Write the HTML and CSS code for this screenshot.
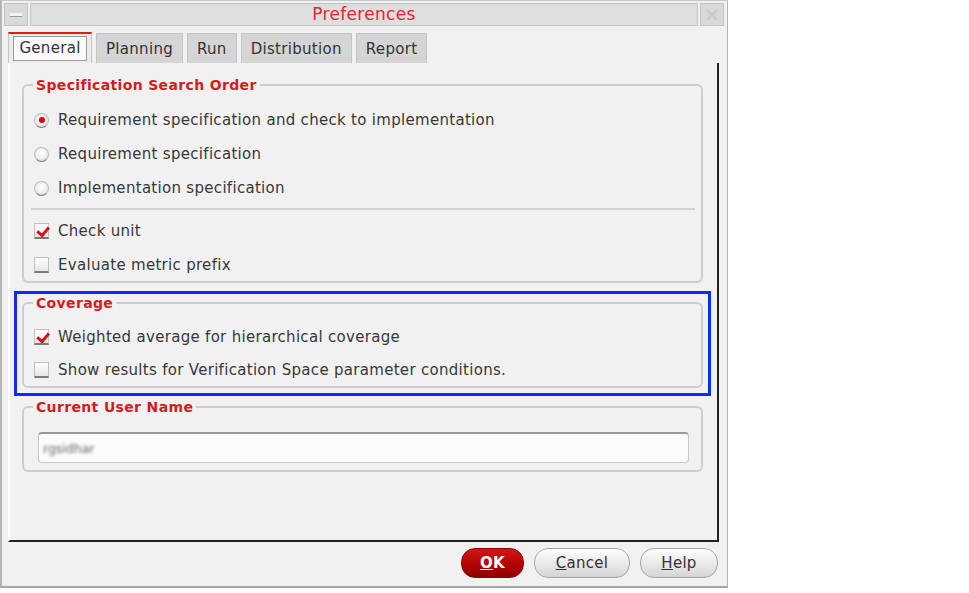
FILE: index.html
```html
<!DOCTYPE html>
<html>
<head>
<meta charset="utf-8">
<title>Preferences</title>
<link rel="stylesheet" href="styles.css">
</head>
<body>
<div class="window">
  <div class="titlebar">
    <div class="tb-btn"><span class="min-glyph"></span></div>
    <div class="title">Preferences</div>
    <div class="tb-btn close">
      <svg width="14" height="14" viewBox="0 0 14 14"><path d="M2 2 L12 12 M12 2 L2 12" stroke="#c8c8c8" stroke-width="2.2" fill="none"/></svg>
    </div>
  </div>
  <div class="tabs">
    <div class="tab active"><span class="focus">General</span></div>
    <div class="tab">Planning</div>
    <div class="tab">Run</div>
    <div class="tab">Distribution</div>
    <div class="tab">Report</div>
  </div>
  <div class="panel">
    <fieldset class="group g1">
      <legend>Specification Search Order</legend>
      <div class="row"><span class="radio on"></span>Requirement specification and check to implementation</div>
      <div class="row"><span class="radio"></span>Requirement specification</div>
      <div class="row"><span class="radio"></span>Implementation specification</div>
      <div class="sep"></div>
      <div class="row"><span class="check on"></span>Check unit</div>
      <div class="row"><span class="check"></span>Evaluate metric prefix</div>
    </fieldset>
    <div class="highlight">
      <fieldset class="group g2">
        <legend>Coverage</legend>
        <div class="row"><span class="check on"></span>Weighted average for hierarchical coverage</div>
        <div class="row"><span class="check"></span>Show results for Verification Space parameter conditions.</div>
      </fieldset>
    </div>
    <fieldset class="group g3">
      <legend>Current User Name</legend>
      <div class="field"><span class="blur">rgsidhar</span></div>
    </fieldset>
  </div>
  <div class="footer">
    <button class="btn ok"><u>O</u>K</button>
    <button class="btn"><u>C</u>ancel</button>
    <button class="btn"><u>H</u>elp</button>
  </div>
</div>
</body>
</html>
```

FILE: styles.css
```css
html, body {
  margin: 0;
  padding: 0;
  background: #ffffff;
}
body {
  font-family: "DejaVu Sans", "Open Sans", sans-serif;
  color: #383838;
}
.window {
  width: 725px;
  height: 585px;
  border-left: 2px solid #b4b4b4;
  border-right: 1px solid #b4b4b4;
  border-bottom: 2px solid #a8a8a8;
  border-top: 1px solid #c8c8c8;
  background: #f1f1f1;
  display: flex;
  flex-direction: column;
}
.titlebar {
  display: flex;
  height: 23px;
  margin: 2px 3px 0 2px;
  gap: 2px;
}
.tb-btn {
  width: 24px;
  background: #d9d9d9;
  border: 1px solid #c2c2c2;
  box-sizing: border-box;
  display: flex;
  align-items: center;
  justify-content: center;
}
.min-glyph {
  width: 12px;
  height: 3px;
  background: #f4f4f4;
  border-bottom: 1px solid #9a9a9a;
}
.title {
  flex: 1;
  background: #dedede;
  border: 1px solid #c4c4c4;
  text-align: center;
  color: #e5262b;
  font-size: 17px;
  letter-spacing: 0.3px;
  line-height: 21px;
}
.tabs {
  display: flex;
  gap: 4px;
  margin: 6px 0 0 6px;
  height: 31px;
  align-items: flex-end;
}
.tab {
  height: 30px;
  box-sizing: border-box;
  padding: 0 9px;
  background: #d5d5d5;
  border: 1px solid #c4c4c4;
  border-bottom: none;
  font-size: 15px;
  letter-spacing: 0.3px;
  line-height: 30px;
  color: #333;
}
.tab.active {
  width: 84px;
  height: 31px;
  background: #ececec;
  border-top: 2px solid #e01c1c;
  padding: 2px 4px 0 4px;
  line-height: 22px;
  text-align: center;
}
.focus {
  display: block;
  border: 1px solid #9a9a9a;
  background: #fafafa;
  padding: 0;
  height: 25px;
  box-sizing: border-box;
}
.panel {
  flex: 1;
  margin-left: 6px;
  margin-right: 8px;
  border-left: 2px solid #ffffff;
  border-right: 2px solid #222;
  border-bottom: 2px solid #222;
  padding: 13px 14px 0 12px;
  display: flex;
  flex-direction: column;
}
.group {
  margin: 0;
  border: 2px solid #cdcdcd;
  border-radius: 6px;
  padding: 0 0 0 10px;
  min-width: 0;
}
.group legend {
  color: #d41c1c;
  font-weight: bold;
  font-size: 14px;
  letter-spacing: 0.35px;
  line-height: 18px;
  padding: 0 3px;
  margin-left: -1px;
}
.row {
  display: flex;
  align-items: center;
  height: 34px;
  font-size: 15px;
  letter-spacing: 0.3px;
}
.g1 { padding-top: 9px; padding-bottom: 0; }
.g1 .row:last-child { height: 33px; }
.sep {
  height: 2px;
  background: #d3d3d3;
  margin: 3px 6px 4px -3px;
}
.radio {
  width: 13px;
  height: 13px;
  border-radius: 50%;
  background: radial-gradient(circle at 50% 40%, #ffffff 0%, #eeeeee 55%, #b8b8b8 100%);
  border: 1px solid #bdbdbd;
  border-bottom-color: #7e7e7e;
  margin-right: 9px;
  display: flex;
  align-items: center;
  justify-content: center;
  flex: none;
}
.radio.on::after {
  content: "";
  width: 6px;
  height: 6px;
  border-radius: 50%;
  background: #e00010;
}
.check {
  width: 13px;
  height: 13px;
  background: linear-gradient(#ffffff, #e6e6e6);
  border: 1px solid #c0c0c0;
  border-bottom: 2px solid #7a7a7a;
  margin-right: 9px;
  flex: none;
  position: relative;
}
.check.on::after {
  content: "";
  position: absolute;
  left: 2px;
  top: 1px;
  width: 9px;
  height: 5px;
  border-left: 3px solid #d8101a;
  border-bottom: 3px solid #d8101a;
  transform: rotate(-50deg) translate(-1px, 1px);
}
.highlight {
  margin: 8px -8px 0 -8px;
  border: 3px solid #0c2cf4;
  padding: 0 5px 5px 5px;
}
.g2 { padding-top: 8px; padding-bottom: 0; }
.g2 .row:last-child { height: 32px; }
.g3 {
  margin-top: 2px;
  padding: 16px 12px 7px 14px;
}
.g3 legend { margin-left: -5px; }
.field {
  height: 31px;
  box-sizing: border-box;
  background: #fcfcfc;
  border: 1px solid #c8c8c8;
  border-top: 2px solid #9a9a9a;
  border-radius: 4px;
  display: flex;
  align-items: center;
  padding-left: 4px;
}
.blur {
  font-size: 12.5px;
  color: #666;
  filter: blur(1.4px);
}
.footer {
  height: 44px;
  display: flex;
  justify-content: flex-end;
  align-items: center;
  gap: 10px;
  padding-right: 9px;
}
.btn {
  font-family: "DejaVu Sans", "Open Sans", sans-serif;
  font-size: 15px;
  letter-spacing: 0.3px;
  height: 30px;
  border-radius: 14px;
  border: 1px solid #a8a8a8;
  background: linear-gradient(#fdfdfd, #e6e6e6 60%, #d4d4d4);
  color: #333;
  padding: 0;
  width: 96px;
  margin-top: -2px;
}
.btn:last-child { width: 78px; }
.btn.ok {
  width: 63px;
  background: linear-gradient(#d11818, #b00000 60%, #8c0000);
  border-color: #8a0000;
  color: #fff;
  font-weight: bold;
}
```
